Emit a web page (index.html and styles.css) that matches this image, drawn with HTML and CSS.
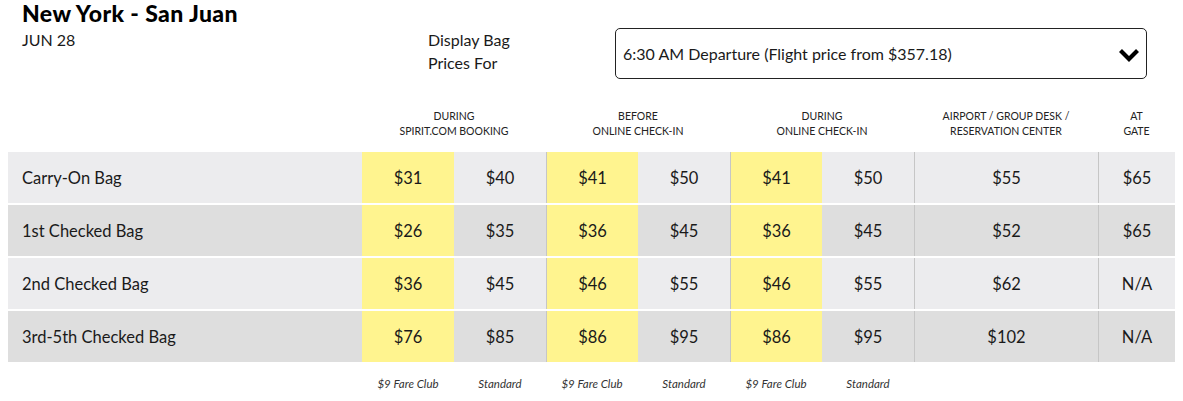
FILE: index.html
```html
<!DOCTYPE html>
<html lang="en">
<head>
<meta charset="utf-8">
<title>Bag Prices</title>
<link rel="stylesheet" href="styles.css">
</head>
<body>
<div class="page">
  <header class="top">
    <div class="route">
      <h1 class="route-title">New York - San Juan</h1>
      <div class="route-date">JUN 28</div>
    </div>
    <div class="display-label">Display Bag<br>Prices For</div>
    <div class="select">
      <span class="select-text">6:30 AM Departure (Flight price from $357.18)</span>
      <svg class="chevron" width="22" height="14" viewBox="0 0 22 14" aria-hidden="true">
        <polyline points="2.5,2.5 11,11 19.5,2.5" fill="none" stroke="#000" stroke-width="4.2" stroke-linejoin="miter"/>
      </svg>
    </div>
  </header>

  <div class="table">
    <div class="row head">
      <div class="cell label"></div>
      <div class="cell span2 group">DURING<br>SPIRIT.COM BOOKING</div>
      <div class="cell span2 group">BEFORE<br>ONLINE CHECK-IN</div>
      <div class="cell span2 group">DURING<br>ONLINE CHECK-IN</div>
      <div class="cell group">AIRPORT / GROUP DESK /<br>RESERVATION CENTER</div>
      <div class="cell group">AT<br>GATE</div>
    </div>

    <div class="row body odd">
      <div class="cell label">Carry-On Bag</div>
      <div class="cell club">$31</div><div class="cell">$40</div>
      <div class="cell club sep">$41</div><div class="cell">$50</div>
      <div class="cell club sep">$41</div><div class="cell">$50</div>
      <div class="cell sep">$55</div>
      <div class="cell sep">$65</div>
    </div>
    <div class="row body even">
      <div class="cell label">1st Checked Bag</div>
      <div class="cell club">$26</div><div class="cell">$35</div>
      <div class="cell club sep">$36</div><div class="cell">$45</div>
      <div class="cell club sep">$36</div><div class="cell">$45</div>
      <div class="cell sep">$52</div>
      <div class="cell sep">$65</div>
    </div>
    <div class="row body odd">
      <div class="cell label">2nd Checked Bag</div>
      <div class="cell club">$36</div><div class="cell">$45</div>
      <div class="cell club sep">$46</div><div class="cell">$55</div>
      <div class="cell club sep">$46</div><div class="cell">$55</div>
      <div class="cell sep">$62</div>
      <div class="cell sep">N/A</div>
    </div>
    <div class="row body even">
      <div class="cell label">3rd-5th Checked Bag</div>
      <div class="cell club">$76</div><div class="cell">$85</div>
      <div class="cell club sep">$86</div><div class="cell">$95</div>
      <div class="cell club sep">$86</div><div class="cell">$95</div>
      <div class="cell sep">$102</div>
      <div class="cell sep">N/A</div>
    </div>

    <div class="row foot">
      <div class="cell label"></div>
      <div class="cell">$9 Fare Club</div><div class="cell">Standard</div>
      <div class="cell">$9 Fare Club</div><div class="cell">Standard</div>
      <div class="cell">$9 Fare Club</div><div class="cell">Standard</div>
      <div class="cell"></div>
      <div class="cell"></div>
    </div>
  </div>
</div>
</body>
</html>
```

FILE: styles.css
```css
html, body {
  margin: 0;
  padding: 0;
  background: #fff;
}
body {
  padding: 0 8px;
  font-family: Lato, "Noto Sans", "Liberation Sans", sans-serif;
  color: #1a1a1a;
}
.page {
  width: 1167px;
}
.top {
  display: grid;
  grid-template-columns: 406px 187px 532px;
  padding-left: 14px;
  height: 102px;
  align-items: start;
}
.route-title {
  margin: 0;
  font-size: 23px;
  font-weight: 900;
  line-height: 26px;
  letter-spacing: 0.4px;
  color: #000;
}
.route-date {
  margin-top: 4px;
  font-size: 16px;
  line-height: 20px;
}
.display-label {
  margin-top: 28px;
  font-size: 16px;
  line-height: 23px;
}
.select {
  margin-top: 28px;
  height: 51px;
  box-sizing: border-box;
  border: 1px solid #222;
  border-radius: 5px;
  display: flex;
  align-items: center;
  justify-content: space-between;
  padding: 0 6px 0 7px;
  font-size: 16px;
}
.chevron {
  display: block;
  margin-top: 2px;
}
.row {
  display: grid;
  grid-template-columns: 354px 92px 92px 92px 92px 92px 92px 184px 77px;
}
.cell {
  box-sizing: border-box;
  display: flex;
  align-items: center;
  justify-content: center;
  text-align: center;
}
.span2 {
  grid-column: span 2;
}
.head {
  height: 50px;
  padding-top: 7px;
  box-sizing: border-box;
}
.head .cell {
  align-items: flex-start;
  font-size: 10.5px;
  line-height: 15px;
  color: #222;
}
.body {
  height: 51px;
  margin-bottom: 2px;
  font-size: 16.5px;
}
.odd { background: #ececee; }
.even { background: #dedede; }
.body .label {
  justify-content: flex-start;
  padding-left: 14px;
}
.club {
  background: #fff48f;
}
.sep {
  border-left: 1px solid #c6c6c6;
}
.foot {
  padding-top: 13px;
}
.foot .cell {
  font-size: 11.5px;
  font-style: italic;
  line-height: 14px;
  color: #333;
}
```
